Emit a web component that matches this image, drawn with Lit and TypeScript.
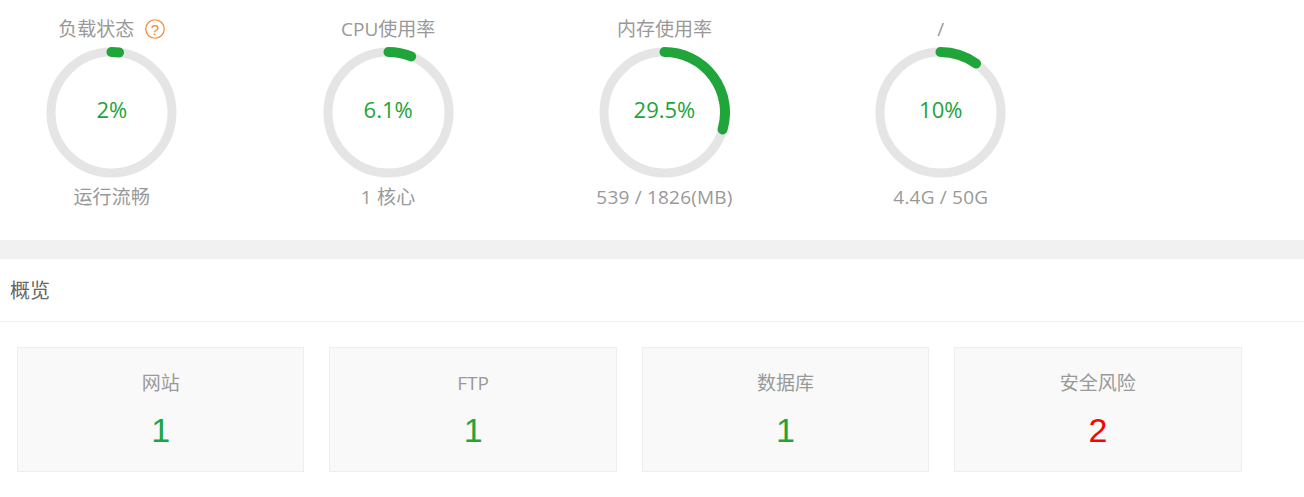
import { LitElement, html, css, svg } from "lit";
import { customElement } from "lit/decorators.js";

const gauges = [
  { title: "负载状态", pct: 2, label: "2%", sub: "运行流畅", help: true },
  { title: "CPU使用率", pct: 6.1, label: "6.1%", sub: "1 核心" },
  { title: "内存使用率", pct: 29.5, label: "29.5%", sub: "539 / 1826(MB)" },
  { title: "/", pct: 10, label: "10%", sub: "4.4G / 50G" },
];
const cards = [
  { name: "网站", value: "1", cls: "green" },
  { name: "FTP", value: "1", cls: "green" },
  { name: "数据库", value: "1", cls: "green" },
  { name: "安全风险", value: "2", cls: "red" },
];

function arc(pct: number) {
  const r = 60.5, c = 65.5;
  const a = (pct / 100) * 2 * Math.PI;
  const x = c + r * Math.sin(a), y = c - r * Math.cos(a);
  return svg`<path d="M${c} ${c - r} A${r} ${r} 0 ${pct > 50 ? 1 : 0} 1 ${x} ${y}" fill="none" stroke="#20a53a" stroke-width="10" stroke-linecap="round"/>`;
}

@customElement("app-root")
export class AppRoot extends LitElement {
  static styles = css`
    :host { display: block; width: 1304px; height: 497px; background: #fff; overflow: hidden;
      font-family: "Open Sans", "Noto Sans CJK SC", sans-serif; color: #999; }
    .gauges { height: 240px; display: flex; gap: 145.33px; padding-left: 46.3px; box-sizing: border-box; }
    .gauge { width: 131px; display: flex; flex-direction: column; align-items: center; }
    .title { height: 47px; padding-top: 17px; box-sizing: border-box; line-height: 24px; font-size: 19px; white-space: nowrap; display: flex; align-items: flex-start; }
    .help { width: 20px; height: 20px; margin-left: 11px; margin-top: 2px; flex: none; }
    .dial { position: relative; width: 131px; height: 131px; }
    .dial svg { display: block; }
    .pct { position: absolute; inset: 0 0 7px 0; display: flex; align-items: center; justify-content: center; font-size: 22px; color: #20a53a; }
    .sub { margin-top: 7px; line-height: 24px; font-size: 19px; white-space: nowrap; letter-spacing: 0.2px; }
    .gap { height: 19px; background: #f1f1f1; }
    .head { height: 63px; box-sizing: border-box; border-bottom: 1px solid #ebeef5; padding: 1px 10px 0; line-height: 62px; font-size: 20px; color: #666; }
    .cards { display: flex; gap: 25px; padding: 25px 0 0 17px; }
    .card { width: 287.4px; height: 125px; box-sizing: border-box; background: #f9f9f9; border: 1px solid #eee;
      display: flex; flex-direction: column; align-items: center; }
    .name { margin-top: 22px; line-height: 26px; font-size: 19px; }
    .num { margin-top: 14px; line-height: 40px; font-family: "Liberation Sans", Arial, sans-serif; font-size: 34px; }
    .green { color: #20a53a; }
    .red { color: #ff0000; }
    .q { font-family: "Liberation Sans", Arial, sans-serif; font-size: 15px; fill: #f7862a; text-anchor: middle; }
  `;
  render() {
    return html`
      <div class="gauges">
        ${gauges.map((g) => html`
          <div class="gauge">
            <div class="title">${g.title}${g.help ? html`
              <svg class="help" viewBox="0 0 20 20"><circle cx="10" cy="10" r="9.25" fill="none" stroke="#f7862a" stroke-width="1.2"/><text class="q" x="10" y="15.5">?</text></svg>` : ""}</div>
            <div class="dial">
              <svg width="131" height="131" viewBox="0 0 131 131">
                <circle cx="65.5" cy="65.5" r="60.5" fill="none" stroke="#e5e5e5" stroke-width="9"/>
                ${arc(g.pct)}
              </svg>
              <div class="pct">${g.label}</div>
            </div>
            <div class="sub">${g.sub}</div>
          </div>`)}
      </div>
      <div class="gap"></div>
      <div class="head">概览</div>
      <div class="cards">
        ${cards.map((c) => html`
          <div class="card">
            <div class="name">${c.name}</div>
            <div class="num ${c.cls}">${c.value}</div>
          </div>`)}
      </div>
    `;
  }
}
